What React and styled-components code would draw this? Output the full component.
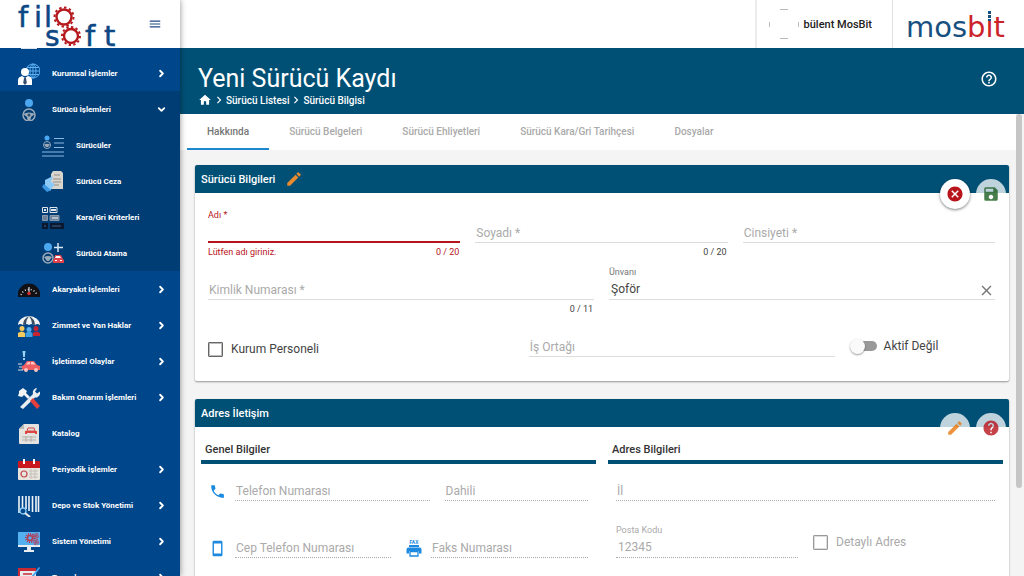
import React, { useState } from 'react';
import styled, { createGlobalStyle, css } from 'styled-components';
import {
    MdHome, MdChevronRight, MdHelpOutline, MdEdit, MdSave, MdCancel, MdHelp,
    MdPhone, MdStayCurrentPortrait, MdClose, MdMenu
} from 'react-icons/md';
import { ChevronRight, ChevronDown } from 'lucide-react';

const GlobalStyle = createGlobalStyle`
    * { box-sizing: border-box; }
    body {
        margin: 0;
        overflow: hidden;
        background: #f4f4f4;
        color: #333;
        font-family: Roboto, "Liberation Sans", sans-serif;
        font-size: 12px;
    }
    button, input { font: inherit; color: inherit; }
    button { border: 0; padding: 0; background: none; cursor: pointer; }
    a { color: inherit; text-decoration: none; }
    svg { display: block; flex: none; }
`

const Shell = styled.div`
    display: grid;
    grid-template-columns: 180px 1fr;
    height: 100vh;
`

/* sidebar */

const Sidebar = styled.aside`
    display: flex;
    flex-direction: column;
    min-height: 0;
    z-index: 2;
    background: #00468a;
    color: #fff;
    box-shadow: 0 0 6px rgba(0, 0, 0, 0.45);
`

const Brand = styled.div`
    display: flex;
    align-items: center;
    justify-content: space-between;
    flex: none;
    height: 48px;
    padding: 0 18px 0 14px;
    background: #fff;
    color: #1c4a86;
`

const Nav = styled.nav`
    flex: 1;
    min-height: 0;
    overflow: hidden;
`

const NavPeek = styled.div`
    height: 7px;
    padding-left: 20px;
`

const NavGroup = styled.div`
    background: ${props => props.$open ? '#003d75' : 'transparent'};
`

const NavItem = styled.a`
    display: flex;
    align-items: center;
    gap: 12px;
    height: 36px;
    padding: 1px 13px 0 ${props => props.$sub ? '42px' : '18px'};
    font-size: 8px;
    font-weight: 700;
    white-space: nowrap;
    span { flex: 1; }
`

/* top bar */

const Body = styled.div`
    display: flex;
    flex-direction: column;
    min-width: 0;
    min-height: 0;
`

const TopBar = styled.header`
    display: flex;
    justify-content: flex-end;
    flex: none;
    height: 48px;
    background: #fff;
`

const User = styled.div`
    display: flex;
    align-items: center;
    gap: 5px;
    padding: 0 20px 0 12px;
    border-left: 2px solid #ececec;
    border-right: 1px solid #e2e2e2;
    font-size: 11px;
    font-weight: 500;
    color: #222;
`

const Company = styled.div`
    display: flex;
    align-items: center;
    padding: 0 17px 0 13px;
`

const PageHead = styled.div`
    display: flex;
    align-items: flex-start;
    justify-content: space-between;
    flex: none;
    height: 66px;
    padding: 16px 26px 0 18px;
    background: #005075;
    color: #fff;
    h1 {
        margin: 0;
        font-size: 25px;
        line-height: 29px;
        font-weight: 400;
    }
    button { height: 29px; }
`

const Crumbs = styled.nav`
    display: flex;
    align-items: center;
    height: 14px;
    font-size: 10px;
    font-weight: 500;
`

const Scroller = styled.div`
    display: flex;
    flex: 1;
    min-height: 0;
    overflow: hidden;
`

const Content = styled.main`
    flex: 1;
    min-width: 0;
`

const Track = styled.div`
    width: 8px;
    background: #f4f4f4;
`

const Thumb = styled.div`
    width: 6px;
    height: 81%;
    border-radius: 3px;
    background: #c6c6c6;
`

const Tabs = styled.div`
    display: flex;
    height: 36px;
    padding-left: 7px;
    background: #fff;
`

const Tab = styled.button`
    padding: 0 20px;
    border-bottom: 2px solid ${props => props.$active ? '#1d87cf' : 'transparent'};
    color: ${props => props.$active ? '#777' : '#aaa'};
    font-size: 10px;
    font-weight: 500;
    white-space: nowrap;
`

const Cards = styled.div`
    display: flex;
    flex-direction: column;
    gap: 18px;
    padding: 15px 7px 0 15px;
`

/* cards */

const Card = styled.section`
    position: relative;
    background: #fff;
    border-radius: 2px;
    box-shadow: 0 1px 2px rgba(0, 0, 0, 0.4);
`

const CardHead = styled.div`
    display: flex;
    align-items: center;
    gap: 10px;
    height: 28px;
    padding: 0 6px;
    border-radius: 2px 2px 0 0;
    background: #005075;
    color: #fff;
    h2 {
        margin: 0;
        font-size: 11px;
        font-weight: 500;
    }
`

const CardActions = styled.div`
    position: absolute;
    top: 14px;
    right: 3px;
    display: flex;
    gap: 6px;
`

const RoundButton = styled.button`
    display: flex;
    align-items: center;
    justify-content: center;
    width: 30px;
    height: 30px;
    border-radius: 50%;
    background: #fff;
    color: ${props => props.$color};
    ${props => props.$faded ? css`
        background: rgba(255, 255, 255, 0.75);
        svg { opacity: 0.8; }
    ` : css`
        box-shadow: 0 1px 3px rgba(0, 0, 0, 0.5);
    `}
`

const FormBody = styled.div`
    padding: 15px 14px 2px 13px;
`

const Row = styled.div`
    display: grid;
    grid-template-columns: ${props => props.$columns};
    gap: 15px;
    height: 57px;
`

/* fields */

const FieldBox = styled.div`
    display: grid;
    grid-column: span ${props => props.$span || 1};
    grid-template-columns: 1fr auto;
    grid-template-rows: 12px 22px 12px;
    flex: 1;
    min-width: 0;
    row-gap: 2px;
    align-content: start;
    color: ${props => props.$error ? '#b8141c' : '#444'};
    label {
        grid-column: 1;
        grid-row: ${props => props.$floating ? 1 : 2};
        align-self: ${props => props.$floating ? 'start' : 'center'};
        padding-left: ${props => props.$floating ? '0' : '1px'};
        font-size: ${props => props.$floating ? '9px' : '12px'};
        line-height: ${props => props.$floating ? '14px' : '16px'};
        color: ${props => props.$error ? '#b8141c' : props.$floating && !props.$disabled ? '#777' : '#aaa'};
        pointer-events: none;
        white-space: nowrap;
    }
    input {
        grid-column: 1 / 3;
        grid-row: 2;
        width: 100%;
        height: 21px;
        padding: 0 2px;
        border: 0;
        border-bottom: 1px ${props => props.$disabled ? 'dotted #aaa' : 'solid #ddd'};
        border-radius: 0;
        outline: 0;
        background: transparent;
        font-size: 12px;
        color: ${props => props.$disabled ? '#aaa' : '#444'};
        ${props => props.$error && css`border-bottom: 2px solid #b8141c;`}
    }
    button {
        grid-column: 2;
        grid-row: 2;
        align-self: center;
        z-index: 1;
        color: #777;
    }
`

const Hint = styled.small`
    grid-row: 3;
    grid-column: ${props => props.$end ? 2 : 1};
    padding-right: ${props => props.$end ? '1px' : '0'};
    font-size: 9px;
    line-height: 12px;
`

const Check = styled.label`
    display: flex;
    grid-column: span ${props => props.$span || 1};
    align-items: center;
    align-self: start;
    gap: 8px;
    height: ${props => props.$disabled ? '38px' : '54px'};
    white-space: nowrap;
    color: ${props => props.$disabled ? '#aaa' : '#444'};
    input {
        appearance: none;
        width: 15px;
        height: 15px;
        margin: 0;
        border: 1px solid ${props => props.$disabled ? '#999' : '#666'};
        border-radius: 1px;
        outline: 1px solid ${props => props.$disabled ? '#ddd' : '#bbb'};
        outline-offset: -2px;
    }
`

const Toggle = styled.label`
    display: flex;
    align-items: center;
    align-self: start;
    gap: 7px;
    height: 48px;
    white-space: nowrap;
    color: #444;
    input {
        position: relative;
        appearance: none;
        width: 24px;
        height: 10px;
        margin: 0 0 0 3px;
        border-radius: 5px;
        background: #999;
    }
    input::before {
        content: '';
        position: absolute;
        top: -2px;
        left: -3px;
        width: 15px;
        height: 15px;
        border-radius: 50%;
        background: #fafafa;
        box-shadow: 0 1px 2px rgba(0, 0, 0, 0.4);
    }
`

const Columns = styled.div`
    display: grid;
    grid-template-columns: 1fr 1fr;
    gap: 12px;
    padding: 0 6px;
    h3 {
        display: flex;
        align-items: center;
        height: 37px;
        margin: 0 0 2px;
        padding: 12px 4px 0;
        border-bottom: 4px solid #005075;
        font-size: 11px;
        font-weight: 500;
        color: #333;
    }
`

const ColumnBody = styled.div`
    padding: 0 8px;
`

const WithIcon = styled.div`
    display: flex;
    gap: 9px;
    min-width: 0;
    > svg {
        margin-top: 17px;
        color: #1d8ae0;
    }
`

const Gear = ({ cx, cy, r, color, width = 2 }) => (
    <g fill="none" stroke={color}>
        <circle cx={cx} cy={cy} r={r} strokeWidth={width} />
        <circle cx={cx} cy={cy} r={r + width / 2 + 0.8} strokeWidth="2" pathLength="24" strokeDasharray="1 1" />
    </g>
)

const FiloSoftLogo = () => (
    <svg width="108" height="48" viewBox="14 0 108 48" overflow="visible" role="img" aria-label="Filo Soft">
        <g fill="#0d4784" stroke="#0d4784" strokeWidth=".5" fontFamily="DejaVu Sans, sans-serif" fontSize="29">
            <text x="18 34 44" y="27">fil</text>
            <text x="45" y="46" fontSize="28">s</text>
            <text x="85 104" y="46">ft</text>
        </g>
        <Gear cx={64} cy={17} r={7.5} width={2.4} color="#b5181d" />
        <Gear cx={71} cy={36} r={7} width={2.4} color="#b5181d" />
    </svg>
)

const MosbitLogo = () => (
    <svg width="101" height="32" viewBox="0 0 101 32" overflow="visible" role="img" aria-label="mosbit">
        <text x="0" y="29" fontFamily="DejaVu Sans, sans-serif" fontSize="29" fill="#17507f">
            mos<tspan fill="#cc2229">bıt</tspan>
        </text>
        <path d="M82 3h3v3h-3zM82 7h3v3h-3zM82 11h3v2h-3z" fill="#17507f" />
    </svg>
)

const Avatar = () => (
    <svg width="30" height="30" viewBox="0 0 30 30" fill="none" stroke="#bbb">
        <path d="M11 .5h8M11 29.5h8M.5 13v5M29.5 13v5" />
    </svg>
)

const FaxIcon = () => (
    <svg width="16" height="17" viewBox="0 0 16 17" fill="currentColor">
        <text x="8" y="4" fontFamily="Roboto, sans-serif" fontSize="5" fontWeight="700" textAnchor="middle">FAX</text>
        <path d="M3 5h10v2H3z" />
        <path d="M2.500 7.500h11A2 2 0 0 1 15.500 9.500v4h-2.500v-2.500H3v2.500H.5v-4a2 2 0 0 1 2-2z" />
        <path d="M4 11.500h8V16H4z" fill="#fff" stroke="currentColor" strokeWidth="1.300" />
    </svg>
)

const drawings = {
    corporate: <>
        <g fill="none" stroke="#5db2f4" strokeWidth="1">
            <circle cx="15" cy="8" r="7" /><ellipse cx="15" cy="8" rx="3" ry="7" />
            <path d="M8 8h14M9 4.500h12M9 11.500h12M15 1v14" />
        </g>
        <circle cx="7" cy="9" r="4" fill="#fff" />
        <path d="M0 22v-5q0-3 4-4l3 2 3-2q4 1 4 4v5z" fill="#fff" />
        <path d="M6 15h2l.8 5L7 22l-1.800-2z" fill="#334e70" />
    </>,
    driver: <>
        <circle cx="11" cy="4" r="4" fill="#4aa7f0" />
        <circle cx="11" cy="16" r="6" fill="none" stroke="#9ba9b8" strokeWidth="1.500" />
        <path d="M5 15q6-3 12 0l-4 3-.5 3.500h-3L9 18z" fill="#9ba9b8" />
        <circle cx="11" cy="16" r="1.500" fill="#31506e" />
    </>,
    drivers: <>
        <circle cx="5" cy="3" r="2.500" fill="#4aa7f0" />
        <circle cx="5" cy="10" r="3.500" fill="none" stroke="#9ba9b8" />
        <path d="M2 9.500q3-1.500 6 0L6 12H4z" fill="#9ba9b8" />
        <path d="M12 3.500h10M12 8h10M12 12.500h10M0 17h22M0 21h22" stroke="#8ab8e0" strokeWidth="1" />
    </>,
    penalty: <>
        <path d="M11 0h8l2 2v16H9V3z" fill="#d8d5cf" />
        <path d="M12 4h6M11 8h8M11 11h8M11 14h6" stroke="#958e86" strokeWidth="1" />
        <path d="M3 9l8-4-2 6 4 2-5 7-5-3z" fill="#8bcaf7" />
        <path d="M0 16l5 5 4-2-7-6z" fill="#3c98e3" />
    </>,
    criteria: <>
        <path d="M.5.5h5v5h-5zM8 .5h7v5H8z" fill="none" stroke="#dfe6ec" />
        <path d="M2 2h2v2H2zM9 2h5v2H9z" fill="#dfe6ec" />
        <path d="M.5 8.500h5v5h-5zM8 8.500h9v5H8z" fill="#68809a" stroke="#8b9aaa" />
        <path d="M10 10h6v2h-6z" fill="#b3bfca" />
        <path d="M0 16h6v6H0zM8 16h14v6H8z" fill="#0b1930" />
        <path d="M2 18h2v2H2zM10 18h9v2h-9z" fill="#263c59" />
    </>,
    assign: <>
        <circle cx="6" cy="4" r="4" fill="#4aa7f0" />
        <path d="M16 0v9M12 4.500h9" stroke="#d8e8f5" strokeWidth="1.500" />
        <circle cx="6" cy="15" r="5" fill="none" stroke="#9ba9b8" strokeWidth="1.500" />
        <path d="M2 14q4-2 8 0l-3 4H5z" fill="#9ba9b8" />
        <path d="M13 12h6l2 4 1 1v3H11v-3l1-1z" fill="#e0424b" />
        <path d="M14 13h4l1 2h-6zM13 17h2v1h-2zM18 17h2v1h-2z" fill="#fff" />
    </>,
    gauge: <>
        <path d="M0 18q-1-6 3-10a11 11 0 0 1 16 0q4 4 3 10z" fill="#101015" />
        <path d="M3 16A8.500 8.500 0 0 1 19 16" fill="none" stroke="#d9d9d9" strokeWidth="1.500" strokeDasharray="1 2" />
        <path d="M11 8v7" stroke="#fff" /><circle cx="11" cy="14.500" r="1.800" fill="#cf2e34" />
    </>,
    umbrella: <>
        <path d="M0 10A11 9 0 0 1 22 10q-3-2-5 0-3-2-6 0-3-2-6 0-3-2-5 0z" fill="#f0f2f3" />
        <path d="M5 10q0-6 6-9-3 4-3 8zM17 10q0-6-6-9 3 4 3 8z" fill="#3b4d61" />
        <circle cx="4" cy="13.500" r="2.500" fill="#f7ca5d" /><path d="M0 22v-4q4-3 7 0v4z" fill="#f7ca5d" />
        <circle cx="18" cy="13.500" r="2.500" fill="#c72431" /><path d="M15 21v-3q3-3 7 0v3z" fill="#c72431" />
        <circle cx="11" cy="14.500" r="2.500" fill="#58b1ee" /><path d="M7.500 22v-4q3.500-3 7 0v4z" fill="#409fe0" />
    </>,
    accident: <>
        <path d="M4.500 0h3l-.7 6H5.200zM5 7h2v2H5z" fill="#9cd2f5" />
        <path d="M6 14l3-4h7l3 4 3 1v4H4v-4z" fill="#ed5f62" />
        <path d="M8 13.500l2-2.500h2v2.500zM13 11h2.500l2 2.500H13z" fill="#ffc4c0" />
        <circle cx="8" cy="19" r="2" fill="#f5c2c0" /><circle cx="18" cy="19" r="2" fill="#f5c2c0" />
        <path d="M0 13h4M1 16h3M0 19h5" stroke="#d7dfe8" strokeWidth="1" />
    </>,
    tools: <>
        <path d="M1 4l4-3 4 3-1 2 4 4-2 2-4-4-2 2-4-1 1-3z" fill="#f0f2f4" />
        <path d="M2 20L15 7q-1-4 3-6l1 .4-2 3 2 2 3-2q1 4-3 6l-2 .2L5 22z" fill="#e9edf0" />
        <path d="M12 14l3-3 7 8-3 3z" fill="#e5403d" />
    </>,
    catalog: <>
        <path d="M6 1h14q1 0 1 1v18q0 1-1 1H2q-1 0-1-1V6z" fill="#e5e3df" />
        <path d="M1 6l5-5v5z" fill="#bdb9b3" />
        <path d="M9 8l1-3h6l1 3z" fill="none" stroke="#db4742" strokeWidth="1" />
        <path d="M7 8h12v3h-2v-1H9v1H7z" fill="#db4742" />
        <path d="M4 14h14M4 17h14M8 13v6M13 13v6" stroke="#b5b0a9" strokeWidth="1" />
    </>,
    calendar: <>
        <path d="M0 9h22v11q0 1-1 1H1q-1 0-1-1z" fill="#e8e4de" />
        <path d="M0 9V3q0-1 1-1h20q1 0 1 1v6z" fill="#c91720" />
        <path d="M5 0h2v5H5zM15 0h2v5h-2z" fill="#fff" />
        <circle cx="6" cy="15" r="3" fill="none" stroke="#c2494d" strokeWidth="1.200" />
        <path d="M11 12h9M11 15h9M11 18h9M13 10v10M17 10v10" stroke="#c6c0b8" strokeWidth="1" />
    </>,
    barcode: <>
        <path d="M1 1v17M4.500 1v12M8 1v13M11 1v15M14.500 1v16M18 1v16M20.500 1v16" stroke="#eef3f8" strokeWidth="1.600" />
        <circle cx="5" cy="16" r="3" fill="#00468a" stroke="#8ccaf5" strokeWidth="1.300" />
        <path d="M7 18l5 4" stroke="#e9edf0" strokeWidth="2" />
    </>,
    system: <>
        <path d="M0 1h22v15H0z" fill="#e8edf1" /><path d="M0 1h22v13H0z" fill="#55b0f1" />
        <path d="M9 16h4v3h3v2H6v-2h3z" fill="#e8edf1" />
        <Gear cx={12} cy={7} r={2.5} width={1.5} color="#b43c55" />
        <Gear cx={18} cy={5} r={1} width={1} color="#b43c55" />
        <Gear cx={18} cy={11} r={1} width={1} color="#b43c55" />
    </>,
    definitions: <>
        <path d="M2 1h16v20H2z" fill="#e9edf0" /><path d="M0 1h18v3H2v5H0z" fill="#c92a35" />
        <path d="M5 7h9M5 10h9" stroke="#c92a35" strokeWidth="1.500" />
        <path d="M21 0l1 1-8 11-2 1v-2z" fill="#4aa7f0" />
    </>
}

const NavIcon = ({ name }) => (
    <svg width="22" height="22" viewBox="0 0 22 22">{drawings[name]}</svg>
)

const subMenu = [
    { icon: 'drivers', text: 'Sürücüler' },
    { icon: 'penalty', text: 'Sürücü Ceza' },
    { icon: 'criteria', text: 'Kara/Gri Kriterleri' },
    { icon: 'assign', text: 'Sürücü Atama' }
]

const menu = [
    { icon: 'corporate', text: 'Kurumsal İşlemler', more: true },
    { icon: 'driver', text: 'Sürücü İşlemleri', more: true, items: subMenu },
    { icon: 'gauge', text: 'Akaryakıt İşlemleri', more: true },
    { icon: 'umbrella', text: 'Zimmet ve Yan Haklar', more: true },
    { icon: 'accident', text: 'İşletimsel Olaylar', more: true },
    { icon: 'tools', text: 'Bakım Onarım İşlemleri', more: true },
    { icon: 'catalog', text: 'Katalog' },
    { icon: 'calendar', text: 'Periyodik İşlemler', more: true },
    { icon: 'barcode', text: 'Depo ve Stok Yönetimi', more: true },
    { icon: 'system', text: 'Sistem Yönetimi', more: true },
    { icon: 'definitions', text: 'Tanımlar', more: true }
]

const tabs = ['Hakkında', 'Sürücü Belgeleri', 'Sürücü Ehliyetleri', 'Sürücü Kara/Gri Tarihçesi', 'Dosyalar']

const Field = ({ id, label, value = '', floating, error, count, disabled, clearable, span }) => {
    const [text, setText] = useState(value)
    return (
        <FieldBox $floating={floating || text !== ''} $error={!!error} $disabled={disabled} $span={span}>
            <label htmlFor={id}>{label}</label>
            <input id={id} type="text" value={text} disabled={disabled} onChange={e => setText(e.target.value)} />
            {clearable ? <button type="button" aria-label="Temizle" onClick={() => setText('')}><MdClose size={17} /></button> : null}
            {error ? <Hint>{error}</Hint> : null}
            {count ? <Hint $end>{text.length} / {count}</Hint> : null}
        </FieldBox>
    )
}

const App = () => {
    const [activeTab, setActiveTab] = useState(0)

    return (
        <Shell>
            <GlobalStyle />
            <Sidebar>
                <Brand>
                    <FiloSoftLogo />
                    <button type="button" aria-label="Menü"><MdMenu size={14} /></button>
                </Brand>
                <Nav>
                    <NavPeek>
                        <svg width="18" height="2"><path d="M1 0h16v1H1z" fill="#dbe4ed" /></svg>
                    </NavPeek>
                    {menu.map(item => (
                        <NavGroup key={item.text} $open={!!item.items}>
                            <NavItem href="#">
                                <NavIcon name={item.icon} />
                                <span>{item.text}</span>
                                {item.items ? <ChevronDown size={11} strokeWidth={4} /> : item.more ? <ChevronRight size={11} strokeWidth={4} /> : null}
                            </NavItem>
                            {item.items ? item.items.map(sub => (
                                <NavItem key={sub.text} href="#" $sub>
                                    <NavIcon name={sub.icon} />
                                    <span>{sub.text}</span>
                                </NavItem>
                            )) : null}
                        </NavGroup>
                    ))}
                </Nav>
            </Sidebar>
            <Body>
                <TopBar>
                    <User><Avatar />bülent MosBit</User>
                    <Company><MosbitLogo /></Company>
                </TopBar>
                <PageHead>
                    <div>
                        <h1>Yeni Sürücü Kaydı</h1>
                        <Crumbs>
                            <a href="#" aria-label="Ana sayfa"><MdHome size={14} /></a>
                            <MdChevronRight size={14} />
                            <a href="#">Sürücü Listesi</a>
                            <MdChevronRight size={14} />
                            <a href="#">Sürücü Bilgisi</a>
                        </Crumbs>
                    </div>
                    <button type="button" aria-label="Yardım"><MdHelpOutline size={18} color="#fff" /></button>
                </PageHead>
                <Scroller>
                    <Content>
                        <Tabs role="tablist">
                            {tabs.map((tab, i) => (
                                <Tab key={tab} type="button" role="tab" aria-selected={i === activeTab}
                                    $active={i === activeTab} onClick={() => setActiveTab(i)}>{tab}</Tab>
                            ))}
                        </Tabs>
                        <Cards>
                            <Card>
                                <CardHead>
                                    <h2>Sürücü Bilgileri</h2>
                                    <MdEdit size={18} color="#e88a2e" />
                                </CardHead>
                                <CardActions>
                                    <RoundButton type="button" aria-label="İptal" $color="#b8141c"><MdCancel size={18} /></RoundButton>
                                    <RoundButton type="button" aria-label="Kaydet" $color="#1b5e20" $faded><MdSave size={18} /></RoundButton>
                                </CardActions>
                                <FormBody>
                                    <Row $columns="repeat(3, 1fr)">
                                        <Field id="adi" label="Adı *" floating error="Lütfen adı giriniz." count={20} />
                                        <Field id="soyadi" label="Soyadı *" count={20} />
                                        <Field id="cinsiyeti" label="Cinsiyeti *" />
                                    </Row>
                                    <Row $columns="repeat(2, 1fr)">
                                        <Field id="kimlik" label="Kimlik Numarası *" count={11} />
                                        <Field id="unvani" label="Ünvanı" value="Şoför" clearable />
                                    </Row>
                                    <Row $columns="repeat(5, 1fr)">
                                        <Check $span={2}><input type="checkbox" />Kurum Personeli</Check>
                                        <Field id="ortak" label="İş Ortağı" span={2} />
                                        <Toggle><input type="checkbox" role="switch" />Aktif Değil</Toggle>
                                    </Row>
                                </FormBody>
                            </Card>
                            <Card>
                                <CardHead>
                                    <h2>Adres İletişim</h2>
                                </CardHead>
                                <CardActions>
                                    <RoundButton type="button" aria-label="Düzenle" $color="#e8780c" $faded><MdEdit size={18} /></RoundButton>
                                    <RoundButton type="button" aria-label="Yardım" $color="#b8141c" $faded><MdHelp size={18} /></RoundButton>
                                </CardActions>
                                <Columns>
                                    <div>
                                        <h3>Genel Bilgiler</h3>
                                        <ColumnBody>
                                            <Row $columns="20fr 13fr">
                                                <WithIcon>
                                                    <MdPhone size={17} />
                                                    <Field id="telefon" label="Telefon Numarası" disabled />
                                                </WithIcon>
                                                <Field id="dahili" label="Dahili" disabled />
                                            </Row>
                                            <Row $columns="1fr 1fr">
                                                <WithIcon>
                                                    <MdStayCurrentPortrait size={17} />
                                                    <Field id="cep" label="Cep Telefon Numarası" disabled />
                                                </WithIcon>
                                                <WithIcon>
                                                    <FaxIcon />
                                                    <Field id="faks" label="Faks Numarası" disabled />
                                                </WithIcon>
                                            </Row>
                                        </ColumnBody>
                                    </div>
                                    <div>
                                        <h3>Adres Bilgileri</h3>
                                        <ColumnBody>
                                            <Row $columns="1fr">
                                                <Field id="il" label="İl" disabled />
                                            </Row>
                                            <Row $columns="1fr 1fr">
                                                <Field id="posta" label="Posta Kodu" value="12345" disabled />
                                                <Check $disabled><input type="checkbox" disabled />Detaylı Adres</Check>
                                            </Row>
                                        </ColumnBody>
                                    </div>
                                </Columns>
                            </Card>
                        </Cards>
                    </Content>
                    <Track><Thumb /></Track>
                </Scroller>
            </Body>
        </Shell>
    );
}

export default App;
